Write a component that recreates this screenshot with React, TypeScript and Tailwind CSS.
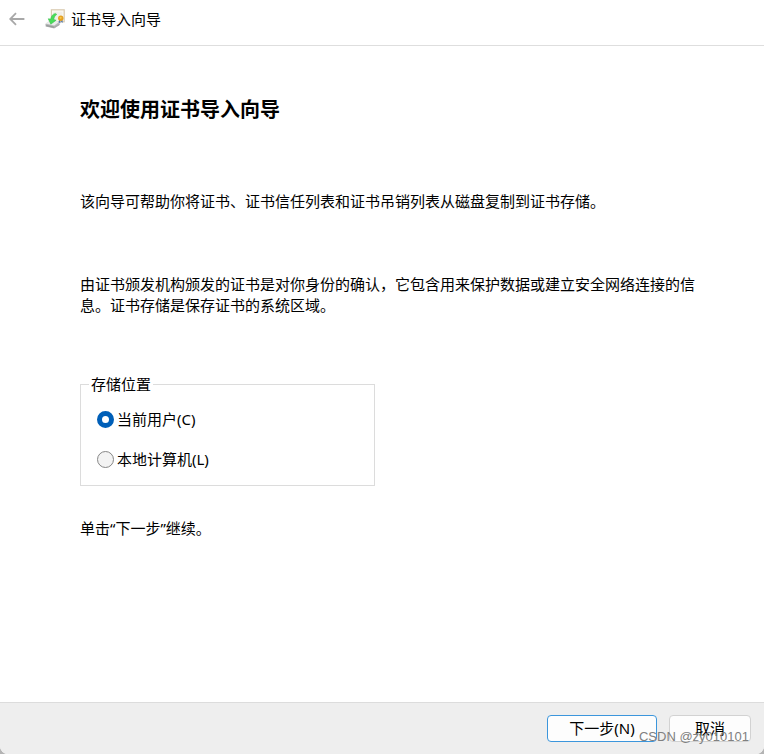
import { useState } from "react";

type StoreLocation = "user" | "machine";

const LOCATIONS: { value: StoreLocation; label: string }[] = [
  { value: "user", label: "当前用户(C)" },
  { value: "machine", label: "本地计算机(L)" },
];

function BackArrow() {
  return (
    <svg width="16" height="14" viewBox="0 0 16 14" fill="none" stroke="#a8a8a8" strokeWidth="1.8" aria-hidden="true">
      <path d="M7 1.2 1.2 7 7 12.8M1.4 7H15.4" />
    </svg>
  );
}

function CertificateIcon() {
  return (
    <svg width="20" height="20" viewBox="0 0 20 20" aria-hidden="true">
      <rect x="6.4" y="0.8" width="12.8" height="12" fill="#fbf8f2" stroke="#d9cab0" strokeWidth="1.2" />
      <rect x="8.2" y="2.8" width="9.2" height="7.8" fill="#f1efea" />
      <path d="M0.4 15 5 11.6l9.6 1v3.4l-5.4 3.6-8.6-2z" fill="#b9bbbb" />
      <path d="M0.6 14.6 5 11.2l9.6 1.4-5.4 3.8z" fill="#ebecec" />
      <path d="m1.2 15.8 8 1.8v1.5l-8-1.9z" fill="#999c9c" />
      <path d="m9.4 17.6 5-3.2v1.5l-5 3.2z" fill="#a9acac" />
      <path d="M10.4 4.4C7.6 5 6.2 7 5.8 10l-2.6-.2 2.6 5.4 5.4-4-2.4-.6c.2-2.2 1-3.8 3-5.2z" fill="#48dc59" stroke="#36bb48" strokeWidth="0.5" />
      <path d="M14.2 10h1.2v4.2l-1.8-1z" fill="#5077ab" />
      <path d="M16 10h1.4l.6 3.8-2-.8z" fill="#6386b5" />
      <circle cx="15.8" cy="9.2" r="2.7" fill="#e5a020" />
      <circle cx="15.6" cy="8.8" r="1.1" fill="#f5c64c" />
    </svg>
  );
}

export default function App() {
  const [location, setLocation] = useState<StoreLocation>("user");

  return (
    <div className="min-h-screen bg-[#b4b4b4] font-['Noto_Sans','Noto_Sans_CJK_SC',sans-serif] text-[15px] leading-[21px] text-black">
      <div className="relative flex min-h-screen flex-col overflow-hidden rounded-b-lg bg-white">
        <header className="flex h-[46px] items-center border-b border-[#dedede] pb-[7px] pl-[9px]">
          <button type="button" aria-label="返回" className="mr-5">
            <BackArrow />
          </button>
          <CertificateIcon />
          <span className="ml-[6px]">证书导入向导</span>
        </header>

        <main className="flex-1 px-[66px] pt-[49px] pl-20">
          <h1 className="text-[20px] leading-[30px] font-bold">欢迎使用证书导入向导</h1>
          <p className="mt-[66px]">该向导可帮助你将证书、证书信任列表和证书吊销列表从磁盘复制到证书存储。</p>
          <p className="mt-[62px]">
            由证书颁发机构颁发的证书是对你身份的确认，它包含用来保护数据或建立安全网络连接的信息。证书存储是保存证书的系统区域。
          </p>

          <fieldset className="mt-[58px] flex w-[295px] flex-col gap-[19px] border border-[#dcdcdc] px-4 pt-[14px] pb-[15px]">
            <legend className="-ml-2 px-[2px]">存储位置</legend>
            {LOCATIONS.map((l) => (
              <label key={l.value} className="flex items-center gap-[3px]">
                <input
                  type="radio"
                  name="store-location"
                  value={l.value}
                  checked={location === l.value}
                  onChange={() => setLocation(l.value)}
                  className="size-[17px] appearance-none rounded-full border border-[#868686] bg-[#f3f3f3] checked:border-[5px] checked:border-[#005fb8] checked:bg-white"
                />
                {l.label}
              </label>
            ))}
          </fieldset>

          <p className="mt-8">单击“下一步”继续。</p>
        </main>

        <footer className="flex justify-end gap-3 border-t border-[#dcdcdc] bg-[#eeeeee] pt-3 pr-[13px] pb-3">
          <button type="button" className="h-[27px] w-[110px] rounded border border-[#3c96dc] bg-[#fdfdfd]">
            下一步(N)
          </button>
          <button type="button" className="h-[27px] w-[82px] rounded border border-[#d2d2d2] bg-[#fdfdfd]">
            取消
          </button>
        </footer>

        <span className="pointer-events-none absolute right-[15px] bottom-[7px] font-['Liberation_Sans',sans-serif] text-[13px] leading-5 text-[#808080]">
          CSDN @zy010101
        </span>
      </div>
    </div>
  );
}
